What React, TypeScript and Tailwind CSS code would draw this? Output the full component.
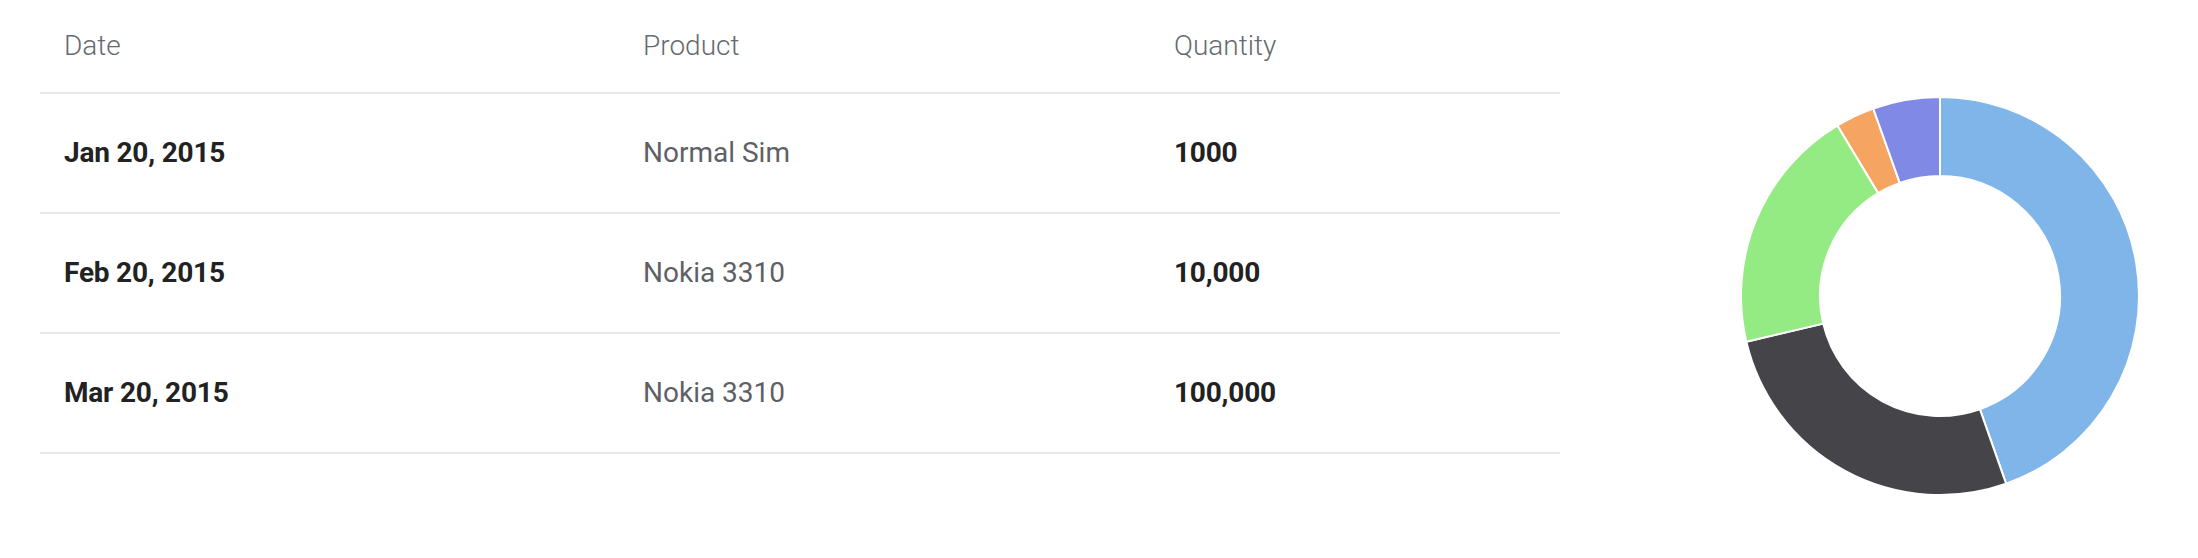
import React from 'react';

interface Sale {
  date: string;
  product: string;
  quantity: string;
}

const sales: Sale[] = [
  { date: 'Jan 20, 2015', product: 'Normal Sim', quantity: '1000' },
  { date: 'Feb 20, 2015', product: 'Nokia 3310', quantity: '10,000' },
  { date: 'Mar 20, 2015', product: 'Nokia 3310', quantity: '100,000' },
];

// angles in degrees, clockwise from the top
const slices = [
  { from: 0, to: 160.6, color: '#7fb5e8' },
  { from: 160.6, to: 256.7, color: '#454449' },
  { from: 256.7, to: 329, color: '#95eb83' },
  { from: 329, to: 340.4, color: '#f5a462' },
  { from: 340.4, to: 360, color: '#8189e6' },
];

const point = (cx: number, cy: number, r: number, deg: number) => {
  const a = (deg * Math.PI) / 180;
  return [cx + r * Math.sin(a), cy - r * Math.cos(a)];
};

const arcPath = (from: number, to: number, outer: number, inner: number) => {
  const c = 200;
  const large = to - from > 180 ? 1 : 0;
  const [x1, y1] = point(c, c, outer, from);
  const [x2, y2] = point(c, c, outer, to);
  const [x3, y3] = point(c, c, inner, to);
  const [x4, y4] = point(c, c, inner, from);
  return `M ${x1} ${y1} A ${outer} ${outer} 0 ${large} 1 ${x2} ${y2} L ${x3} ${y3} A ${inner} ${inner} 0 ${large} 0 ${x4} ${y4} Z`;
};

const Doughnut: React.FC = () => (
  <svg width="400" height="400" viewBox="0 0 400 400">
    {slices.map(s => (
      <path
        key={s.color}
        d={arcPath(s.from, s.to, 199, 120)}
        fill={s.color}
        stroke="#ffffff"
        strokeWidth={2}
        strokeLinejoin="round"
      />
    ))}
  </svg>
);

export default function App() {
  return (
    <div className="flex bg-white pl-[40px] font-['Roboto',sans-serif] h-[558px]">
      <table className="w-[1520px] self-start border-collapse text-[28px] leading-[28px]">
        <thead>
          <tr className="border-b-2 border-[#e8e8e8]">
            <th className="w-[579px] px-6 py-8 text-left font-light text-[#666a70]">Date</th>
            <th className="w-[531px] px-6 py-8 text-left font-light text-[#666a70]">Product</th>
            <th className="px-6 py-8 text-left font-light text-[#666a70]">Quantity</th>
          </tr>
        </thead>
        <tbody>
          {sales.map(row => (
            <tr key={row.date} className="border-b-2 border-[#e8e8e8]">
              <td className="px-6 py-[45px] font-bold tracking-[-0.2px] text-[#222222]">{row.date}</td>
              <td className="px-6 py-[45px] text-[#5f6066]">{row.product}</td>
              <td className="px-6 py-[45px] font-bold tracking-[-0.2px] text-[#222222]">{row.quantity}</td>
            </tr>
          ))}
        </tbody>
      </table>
      <div className="ml-[180px] mt-[96px] self-start">
        <Doughnut />
      </div>
    </div>
  );
}
